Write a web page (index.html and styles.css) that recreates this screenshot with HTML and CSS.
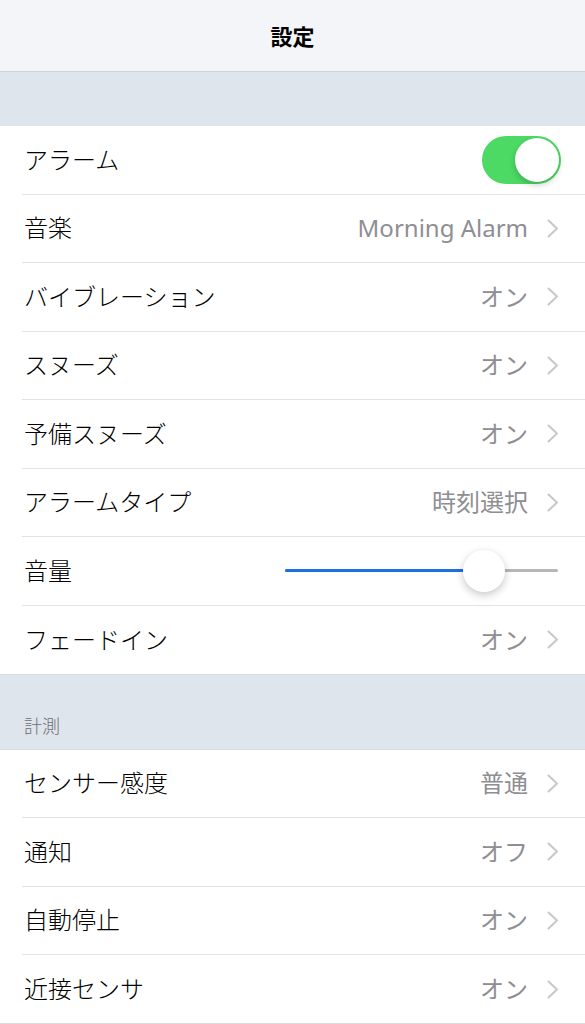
FILE: index.html
```html
<!DOCTYPE html>
<html lang="ja">
<head>
  <meta charset="UTF-8">
  <meta name="viewport" content="width=device-width, initial-scale=1.0">
  <title>設定</title>
  <link rel="stylesheet" href="styles.css">
</head>
<body>
  <header class="nav-bar">
    <h1>設定</h1>
  </header>

  <div class="section-gap"></div>

  <ul class="table-group">
    <li class="cell">
      <span class="cell-label">アラーム</span>
      <span class="switch switch-on"><span class="switch-knob"></span></span>
    </li>
    <li class="cell">
      <span class="cell-label">音楽</span>
      <span class="cell-value">Morning Alarm</span>
      <svg class="chevron" viewBox="0 0 12 19"><polyline points="1.5,1.5 10,9.5 1.5,17.5"/></svg>
    </li>
    <li class="cell">
      <span class="cell-label">バイブレーション</span>
      <span class="cell-value">オン</span>
      <svg class="chevron" viewBox="0 0 12 19"><polyline points="1.5,1.5 10,9.5 1.5,17.5"/></svg>
    </li>
    <li class="cell">
      <span class="cell-label">スヌーズ</span>
      <span class="cell-value">オン</span>
      <svg class="chevron" viewBox="0 0 12 19"><polyline points="1.5,1.5 10,9.5 1.5,17.5"/></svg>
    </li>
    <li class="cell">
      <span class="cell-label">予備スヌーズ</span>
      <span class="cell-value">オン</span>
      <svg class="chevron" viewBox="0 0 12 19"><polyline points="1.5,1.5 10,9.5 1.5,17.5"/></svg>
    </li>
    <li class="cell">
      <span class="cell-label">アラームタイプ</span>
      <span class="cell-value">時刻選択</span>
      <svg class="chevron" viewBox="0 0 12 19"><polyline points="1.5,1.5 10,9.5 1.5,17.5"/></svg>
    </li>
    <li class="cell">
      <span class="cell-label">音量</span>
      <div class="slider">
        <div class="slider-fill" style="width: 73%"></div>
        <div class="slider-thumb" style="left: 73%"></div>
      </div>
    </li>
    <li class="cell">
      <span class="cell-label">フェードイン</span>
      <span class="cell-value">オン</span>
      <svg class="chevron" viewBox="0 0 12 19"><polyline points="1.5,1.5 10,9.5 1.5,17.5"/></svg>
    </li>
  </ul>

  <div class="section-header">計測</div>

  <ul class="table-group">
    <li class="cell">
      <span class="cell-label">センサー感度</span>
      <span class="cell-value">普通</span>
      <svg class="chevron" viewBox="0 0 12 19"><polyline points="1.5,1.5 10,9.5 1.5,17.5"/></svg>
    </li>
    <li class="cell">
      <span class="cell-label">通知</span>
      <span class="cell-value">オフ</span>
      <svg class="chevron" viewBox="0 0 12 19"><polyline points="1.5,1.5 10,9.5 1.5,17.5"/></svg>
    </li>
    <li class="cell">
      <span class="cell-label">自動停止</span>
      <span class="cell-value">オン</span>
      <svg class="chevron" viewBox="0 0 12 19"><polyline points="1.5,1.5 10,9.5 1.5,17.5"/></svg>
    </li>
    <li class="cell">
      <span class="cell-label">近接センサ</span>
      <span class="cell-value">オン</span>
      <svg class="chevron" viewBox="0 0 12 19"><polyline points="1.5,1.5 10,9.5 1.5,17.5"/></svg>
    </li>
  </ul>
</body>
</html>
```

FILE: styles.css
```css
body {
  font-family: 'Noto Sans', 'Noto Sans CJK JP', sans-serif;
  font-weight: 300;
  margin: 0;
  background-color: #dfe5ed;
  color: #000;
}

.nav-bar {
  height: 71px;
  background-color: #f4f5f8;
  border-bottom: 1px solid #cfd4dc;
  display: flex;
  align-items: center;
  justify-content: center;
}

.nav-bar h1 {
  margin: 0;
  font-size: 22px;
  font-weight: bold;
  line-height: 1;
  padding-top: 1px;
}

.section-gap {
  height: 54px;
}

.section-header {
  height: 75px;
  box-sizing: border-box;
  padding: 0 0 14px 24px;
  display: flex;
  align-items: flex-end;
  font-size: 18px;
  line-height: 1;
  color: #6d6d72;
  border-bottom: 1px solid #d8dbe0;
}

.table-group {
  list-style: none;
  margin: 0;
  padding: 0;
  background: #fff;
  border-bottom: 1px solid #d8dbe0;
}

.cell {
  height: 68.5px;
  box-sizing: border-box;
  margin-left: 22px;
  padding: 0 26px 0 2px;
  display: flex;
  align-items: center;
  border-bottom: 1px solid #e2e3e6;
}

.cell:last-child {
  border-bottom: none;
  height: 68px;
}

.cell-label {
  flex: 1;
  font-size: 24px;
  line-height: 1;
  white-space: nowrap;
}

.cell-value {
  font-size: 24px;
  font-weight: 400;
  line-height: 1;
  color: #8e8e93;
  margin-right: 19px;
}

.chevron {
  width: 12px;
  height: 19px;
  fill: none;
  stroke: #c7c7cc;
  stroke-width: 2;
  stroke-linecap: round;
  stroke-linejoin: round;
}

.switch {
  width: 79px;
  height: 48px;
  border-radius: 24px;
  background-color: #4cd964;
  position: relative;
  margin-right: -2px;
}

.switch-knob {
  position: absolute;
  top: 2px;
  right: 2px;
  width: 44px;
  height: 44px;
  border-radius: 50%;
  background: #fff;
  box-shadow: 0 3px 6px rgba(0, 0, 0, 0.2);
}

.slider {
  position: relative;
  width: 273px;
  height: 3px;
  background-color: #b7b7b7;
  border-radius: 2px;
  margin-right: 1px;
}

.slider-fill {
  height: 3px;
  background-color: #1e6fe0;
  border-radius: 2px;
}

.slider-thumb {
  position: absolute;
  top: 50%;
  width: 42px;
  height: 42px;
  margin: -21px 0 0 -21px;
  border-radius: 50%;
  background: #fff;
  box-shadow: 0 3px 8px rgba(0, 0, 0, 0.22);
}
```
